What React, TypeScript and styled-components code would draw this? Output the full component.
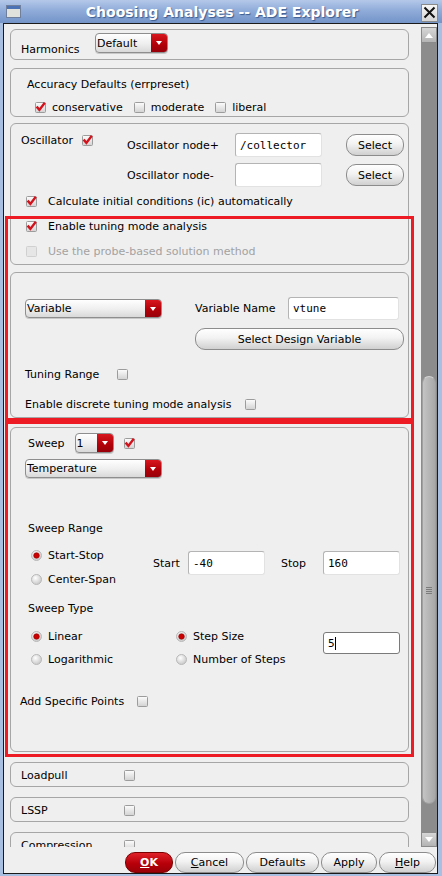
import React from "react";
import styled, { createGlobalStyle } from "styled-components";

const RED = "#ed1c24";

const GlobalStyle = createGlobalStyle`
  * { box-sizing: border-box; }
  html, body { margin: 0; padding: 0; }
  body {
    font-family: "DejaVu Sans", "Liberation Sans", sans-serif;
    font-size: 11px;
    color: #000;
    background: #a9bfe2;
  }
`;

const Window = styled.div`
  width: 442px;
  height: 876px;
  display: flex;
  flex-direction: column;
  overflow: hidden;
  background: #a9bfe2;
`;

const TitleBar = styled.div`
  height: 23px;
  flex-shrink: 0;
  display: grid;
  grid-template-columns: 1fr auto 1fr;
  align-items: center;
  padding: 0 4px 0 6px;
  background: linear-gradient(180deg, #b4c8e9 0%, #90acd9 45%, #7393c8 100%);
`;

const Title = styled.div`
  font-weight: bold;
  font-size: 14px;
  color: #fff;
  text-shadow: 1px 1px 1px #3d5c8e;
  white-space: nowrap;
`;

const CloseBox = styled.div`
  justify-self: end;
  width: 17px;
  height: 18px;
  margin-top: 2px;
  border: 1px solid #8a8a8a;
  background: linear-gradient(#f6f6f6, #d6d6d6);
  display: flex;
  align-items: center;
  justify-content: center;
`;

const FrameBody = styled.div`
  flex: 1;
  min-height: 0;
  display: flex;
  padding: 0 4px 2px 3px;
`;

const Body = styled.div`
  flex: 1;
  min-width: 0;
  display: flex;
  flex-direction: column;
  border: 1px solid #1a1a1a;
  background: #efefef;
`;

const ScrollArea = styled.div`
  flex: 1;
  min-height: 0;
  display: flex;
  overflow: hidden;
`;

const Content = styled.div`
  position: relative;
  flex: 1;
  min-width: 0;
  display: flex;
  flex-direction: column;
  padding: 5px 12px 0 6px;
  overflow: hidden;
  & > * { flex-shrink: 0; }
`;

const Annotation = styled.div`
  position: absolute;
  left: 1px;
  top: 192px;
  width: 409px;
  height: 205px;
  border: 3px solid ${RED};
  pointer-events: none;
`;

const Highlight = styled.div<{ $mt?: number }>`
  margin: ${p => p.$mt ?? 0}px -5px 0;
  border: 3px solid ${RED};
  padding: 3px 2px 2px;
`;

const Panel = styled.div<{ $mt?: number }>`
  margin-top: ${p => p.$mt ?? 0}px;
  border: 1px solid #a6a6a6;
  border-radius: 6px;
  background: #efefef;
`;

const Text = styled.span<{ $w?: number; $muted?: boolean }>`
  line-height: 13px;
  white-space: nowrap;
  color: ${p => (p.$muted ? "#a2a2a2" : "#000")};
  ${p => (p.$w ? `width: ${p.$w}px; flex-shrink: 0;` : "")}
`;

/* ---------- widgets ---------- */

const Combo = styled.div<{ $w: number; $h: number }>`
  width: ${p => p.$w}px;
  height: ${p => p.$h}px;
  flex-shrink: 0;
  display: flex;
  border: 1px solid #8e8e8e;
  border-radius: 4px;
  overflow: hidden;
  background: linear-gradient(#ffffff, #eeeeee 55%, #d9d9d9);
  box-shadow: 0 1px 0 #c8c8c8;
`;

const ComboText = styled.span`
  flex: 1;
  padding-left: 1px;
  display: flex;
  align-items: center;
  white-space: nowrap;
`;

const ComboArrow = styled.span`
  width: 16px;
  display: flex;
  align-items: center;
  justify-content: center;
  background: linear-gradient(#d8161e, #b00008 60%, #98000a);
  &::after {
    content: "";
    border-left: 3.5px solid transparent;
    border-right: 3.5px solid transparent;
    border-top: 4px solid #fff;
  }
`;

const Dropdown = ({ value, w, h }: { value: string; w: number; h: number }) => (
  <Combo $w={w} $h={h}>
    <ComboText>{value}</ComboText>
    <ComboArrow />
  </Combo>
);

const Field = styled.div<{ $w: number; $h: number; $focus?: boolean }>`
  width: ${p => p.$w}px;
  height: ${p => p.$h}px;
  flex-shrink: 0;
  display: flex;
  align-items: center;
  padding-left: 4px;
  background: #fff;
  border: 1px solid ${p => (p.$focus ? "#7a7a7a" : "#b4b4b4")};
  border-right-color: ${p => (p.$focus ? "#7a7a7a" : "#e2e2e2")};
  border-bottom-color: ${p => (p.$focus ? "#7a7a7a" : "#e2e2e2")};
  border-radius: 3px;
  font-family: "DejaVu Sans Mono", "Liberation Mono", monospace;
  font-size: 11px;
  white-space: nowrap;
`;

const Caret = styled.span`
  display: inline-block;
  width: 1px;
  height: 13px;
  background: #000;
`;

const PushButton = styled.div<{ $w: number; $h?: number; $primary?: boolean }>`
  width: ${p => p.$w}px;
  height: ${p => p.$h ?? 21}px;
  flex-shrink: 0;
  display: flex;
  align-items: center;
  justify-content: center;
  border: 1px solid ${p => (p.$primary ? "#7a0000" : "#8c8c8c")};
  border-radius: 10px;
  background: ${p =>
    p.$primary
      ? "linear-gradient(#e0222a, #b8000a 55%, #9a0008)"
      : "linear-gradient(#ffffff, #f2f2f2 45%, #d0d0d0)"};
  color: ${p => (p.$primary ? "#fff" : "#000")};
  font-weight: ${p => (p.$primary ? "bold" : "normal")};
  white-space: nowrap;
  u { text-decoration: underline; }
`;

const BoxSvg = styled.svg`
  flex-shrink: 0;
  display: block;
`;

const CheckBox = ({ checked, disabled }: { checked?: boolean; disabled?: boolean }) => (
  <BoxSvg width="11" height="11" viewBox="0 0 11 11">
    <defs>
      <linearGradient id="cbFill" x1="0" y1="0" x2="0" y2="1">
        <stop offset="0" stopColor="#fdfdfd" />
        <stop offset="1" stopColor="#d2d2d2" />
      </linearGradient>
    </defs>
    <rect
      x="0.5"
      y="0.5"
      width="10"
      height="10"
      rx="1"
      fill={disabled ? "#e6e6e6" : "url(#cbFill)"}
      stroke={disabled ? "#d0d0d0" : "#9c9c9c"}
    />
    {checked && (
      <path
        d="M1.6 4.6 L4.4 7.9 L9.8 0.8"
        fill="none"
        stroke="#d3121c"
        strokeWidth="2.4"
      />
    )}
  </BoxSvg>
);

const Radio = ({ on }: { on?: boolean }) => (
  <BoxSvg width="11" height="11" viewBox="0 0 11 11">
    <defs>
      <radialGradient id="rbFill" cx="0.4" cy="0.35" r="0.7">
        <stop offset="0" stopColor="#ffffff" />
        <stop offset="1" stopColor="#c4c4c4" />
      </radialGradient>
    </defs>
    <circle cx="5.5" cy="5.5" r="5" fill="url(#rbFill)" stroke="#b8b8b8" />
    {on && <circle cx="5.5" cy="5.5" r="2.8" fill="#cc0000" stroke="#8a0000" strokeWidth="0.6" />}
  </BoxSvg>
);

/* ---------- panel layouts ---------- */

const HarmPanel = styled(Panel)`
  display: flex;
  align-items: flex-end;
  padding: 3px 0 6px 10px;
  ${Text} { margin-bottom: -3px; }
`;

const AccuracyPanel = styled(Panel)`
  padding: 9px 0 2px 16px;
`;

const Row = styled.div<{ $gap?: number; $mt?: number; $ml?: number }>`
  display: flex;
  align-items: center;
  gap: ${p => p.$gap ?? 0}px;
  margin-top: ${p => p.$mt ?? 0}px;
  margin-left: ${p => p.$ml ?? 0}px;
  line-height: 13px;
`;

const Item = styled.span<{ $gap?: number }>`
  display: inline-flex;
  align-items: center;
  gap: ${p => p.$gap ?? 6}px;
`;

const OscPanel = styled(Panel)`
  padding: 9px 0 6px 10px;
`;

const OscRow = styled.div`
  display: flex;
  align-items: flex-start;
`;

const OscToggle = styled.div`
  width: 106px;
  height: 13px;
  display: flex;
  align-items: center;
  gap: 9px;
  margin-top: 1px;
`;

const NodeGrid = styled.div`
  display: grid;
  grid-template-columns: 84px 87px 58px;
  grid-auto-rows: 24px;
  column-gap: 24px;
  row-gap: 6px;
  align-items: center;
`;

const CheckList = styled.div`
  display: flex;
  flex-direction: column;
  gap: 12px;
  margin-top: 8px;
  padding-left: 5px;
`;

const TuningPanel = styled(Panel)`
  padding: 24px 0 6px 14px;
`;

const TuneGrid = styled.div`
  display: grid;
  grid-template-columns: 170px 93px 111px;
  grid-template-rows: 23px 22px;
  row-gap: 8px;
  align-items: center;
`;

const WideButton = styled(PushButton)`
  grid-column: 2 / span 2;
  margin-right: -5px;
  width: auto;
`;

const SweepPanel = styled(Panel)`
  padding: 5px 0 43px 14px;
`;

const SectionLabel = styled.div<{ $mt: number }>`
  margin: ${p => p.$mt}px 0 0 3px;
  line-height: 13px;
`;

const ChoiceRow = styled.div<{ $mt: number }>`
  display: flex;
  align-items: flex-start;
  margin: ${p => p.$mt}px 0 0 6px;
`;

const RadioCol = styled.div<{ $w: number; $gap: number }>`
  width: ${p => p.$w}px;
  flex-shrink: 0;
  display: flex;
  flex-direction: column;
  gap: ${p => p.$gap}px;
  line-height: 13px;
`;

const FieldGroup = styled.div`
  display: flex;
  align-items: center;
  margin-top: 2px;
  line-height: 13px;
`;

const StopLabel = styled(Text)`
  margin-left: 16px;
`;

const ToggleRowPanel = styled(Panel)`
  display: flex;
  align-items: center;
  padding: 6px 0 4px 10px;
`;

/* ---------- scrollbar & footer ---------- */

const Scrollbar = styled.div`
  width: 16px;
  flex-shrink: 0;
  margin-top: 3px;
  display: flex;
  flex-direction: column;
  background: #8c8c8c;
`;

const ScrollButton = styled.div<{ $h: number; $down?: boolean }>`
  height: ${p => p.$h}px;
  flex-shrink: 0;
  display: flex;
  align-items: center;
  justify-content: center;
  background: linear-gradient(#d6d6d6, #b4b4b4);
  border: 1px solid #8a8a8a;
  &::after {
    content: "";
    border-left: 4px solid transparent;
    border-right: 4px solid transparent;
    ${p => (p.$down ? "border-top: 5px solid #fff;" : "border-bottom: 5px solid #fff;")}
  }
`;

const Track = styled.div`
  flex: 1;
  display: flex;
  flex-direction: column;
  padding: 333px 1px 28px;
`;

const Thumb = styled.div`
  flex: 1;
  border-radius: 7px;
  background: linear-gradient(90deg, #c4c4c4, #b6b6b6 50%, #a8a8a8);
  border: 1px solid #a0a0a0;
  border-top-color: #d4d4d4;
  display: flex;
  align-items: center;
  justify-content: center;
`;

const Grip = styled.div`
  width: 6px;
  height: 7px;
  background: repeating-linear-gradient(180deg, #7c7c7c 0 1px, transparent 1px 2px);
`;

const ButtonBar = styled.div`
  height: 26px;
  flex-shrink: 0;
  display: flex;
  justify-content: flex-end;
  gap: 2px;
  padding: 5px 1px 0 0;
`;

export default function App() {
  return (
    <>
      <GlobalStyle />
      <Window>
        <TitleBar>
          <svg width="15" height="13" viewBox="0 0 15 13">
            <rect x="0.5" y="0.5" width="14" height="12" fill="#e2e2dc" stroke="#6f7f9c" />
            <rect x="1" y="1" width="13" height="3" fill="#4a72b4" />
          </svg>
          <Title>Choosing Analyses -- ADE Explorer</Title>
          <CloseBox>
            <svg width="13" height="13" viewBox="0 0 13 13">
              <path d="M1.5 1.5 L11.5 11.5 M11.5 1.5 L1.5 11.5" stroke="#111" strokeWidth="2" />
            </svg>
          </CloseBox>
        </TitleBar>
        <FrameBody>
          <Body>
            <ScrollArea>
              <Content>
                <HarmPanel>
                  <Text $w={74}>Harmonics</Text>
                  <Dropdown value="Default" w={73} h={20} />
                </HarmPanel>

                <AccuracyPanel $mt={8}>
                  <Text>Accuracy Defaults (errpreset)</Text>
                  <Row $mt={10} $ml={8} $gap={11}>
                    <Item><CheckBox checked /><Text>conservative</Text></Item>
                    <Item><CheckBox /><Text>moderate</Text></Item>
                    <Item><CheckBox /><Text>liberal</Text></Item>
                  </Row>
                </AccuracyPanel>

                <OscPanel $mt={6}>
                  <OscRow>
                    <OscToggle>
                      <Text>Oscillator</Text>
                      <CheckBox checked />
                    </OscToggle>
                    <NodeGrid>
                      <Text>Oscillator node+</Text>
                      <Field $w={87} $h={24}>/collector</Field>
                      <PushButton $w={58} $h={22}>Select</PushButton>
                      <Text>Oscillator node-</Text>
                      <Field $w={87} $h={24} />
                      <PushButton $w={58} $h={22}>Select</PushButton>
                    </NodeGrid>
                  </OscRow>
                  <CheckList>
                    <Row $gap={11}><CheckBox checked /><Text>Calculate initial conditions (ic) automatically</Text></Row>
                    <Row $gap={11}><CheckBox checked /><Text>Enable tuning mode analysis</Text></Row>
                    <Row $gap={11}><CheckBox disabled /><Text $muted>Use the probe-based solution method</Text></Row>
                  </CheckList>
                </OscPanel>

                <TuningPanel $mt={7}>
                  <TuneGrid>
                    <Dropdown value="Variable" w={137} h={19} />
                    <Text>Variable Name</Text>
                    <Field $w={111} $h={23}>vtune</Field>
                    <WideButton $w={0} $h={22}>Select Design Variable</WideButton>
                  </TuneGrid>
                  <Row $mt={18} $gap={18}>
                    <Text>Tuning Range</Text>
                    <CheckBox />
                  </Row>
                  <Row $mt={17} $gap={14}>
                    <Text>Enable discrete tuning mode analysis</Text>
                    <CheckBox />
                  </Row>
                </TuningPanel>

                <Highlight $mt={3}>
                  <SweepPanel>
                    <Row $ml={3} $gap={10}>
                      <Text>Sweep</Text>
                      <Dropdown value="1" w={39} h={20} />
                      <CheckBox checked />
                    </Row>
                    <Row $mt={6}>
                      <Dropdown value="Temperature" w={137} h={19} />
                    </Row>

                    <SectionLabel $mt={44}>Sweep Range</SectionLabel>
                    <ChoiceRow $mt={14}>
                      <RadioCol $w={122} $gap={11}>
                        <Item><Radio on /><Text>Start-Stop</Text></Item>
                        <Item><Radio /><Text>Center-Span</Text></Item>
                      </RadioCol>
                      <FieldGroup>
                        <Text $w={35}>Start</Text>
                        <Field $w={77} $h={24}>-40</Field>
                        <StopLabel $w={42}>Stop</StopLabel>
                        <Field $w={77} $h={24}>160</Field>
                      </FieldGroup>
                    </ChoiceRow>

                    <SectionLabel $mt={16}>Sweep Type</SectionLabel>
                    <ChoiceRow $mt={15}>
                      <RadioCol $w={145} $gap={10}>
                        <Item><Radio on /><Text>Linear</Text></Item>
                        <Item><Radio /><Text>Logarithmic</Text></Item>
                      </RadioCol>
                      <RadioCol $w={147} $gap={10}>
                        <Item><Radio on /><Text>Step Size</Text></Item>
                        <Item><Radio /><Text>Number of Steps</Text></Item>
                      </RadioCol>
                      <FieldGroup>
                        <Field $w={77} $h={22} $focus>5<Caret /></Field>
                      </FieldGroup>
                    </ChoiceRow>

                    <Row $mt={29} $ml={-5} $gap={13}>
                      <Text>Add Specific Points</Text>
                      <CheckBox />
                    </Row>
                  </SweepPanel>
                </Highlight>

                <ToggleRowPanel $mt={5}>
                  <Text $w={103}>Loadpull</Text>
                  <CheckBox />
                </ToggleRowPanel>
                <ToggleRowPanel $mt={10}>
                  <Text $w={103}>LSSP</Text>
                  <CheckBox />
                </ToggleRowPanel>
                <ToggleRowPanel $mt={10}>
                  <Text $w={103}>Compression</Text>
                  <CheckBox />
                </ToggleRowPanel>

                <Annotation />
              </Content>
              <Scrollbar>
                <ScrollButton $h={16} />
                <Track>
                  <Thumb>
                    <Grip />
                  </Thumb>
                </Track>
                <ScrollButton $h={15} $down />
              </Scrollbar>
            </ScrollArea>
            <ButtonBar>
              <PushButton $w={48} $primary><u>O</u>K</PushButton>
              <PushButton $w={69}><u>C</u>ancel</PushButton>
              <PushButton $w={73}>Defaults</PushButton>
              <PushButton $w={56}>Apply</PushButton>
              <PushButton $w={57}><u>H</u>elp</PushButton>
            </ButtonBar>
          </Body>
        </FrameBody>
      </Window>
    </>
  );
}
